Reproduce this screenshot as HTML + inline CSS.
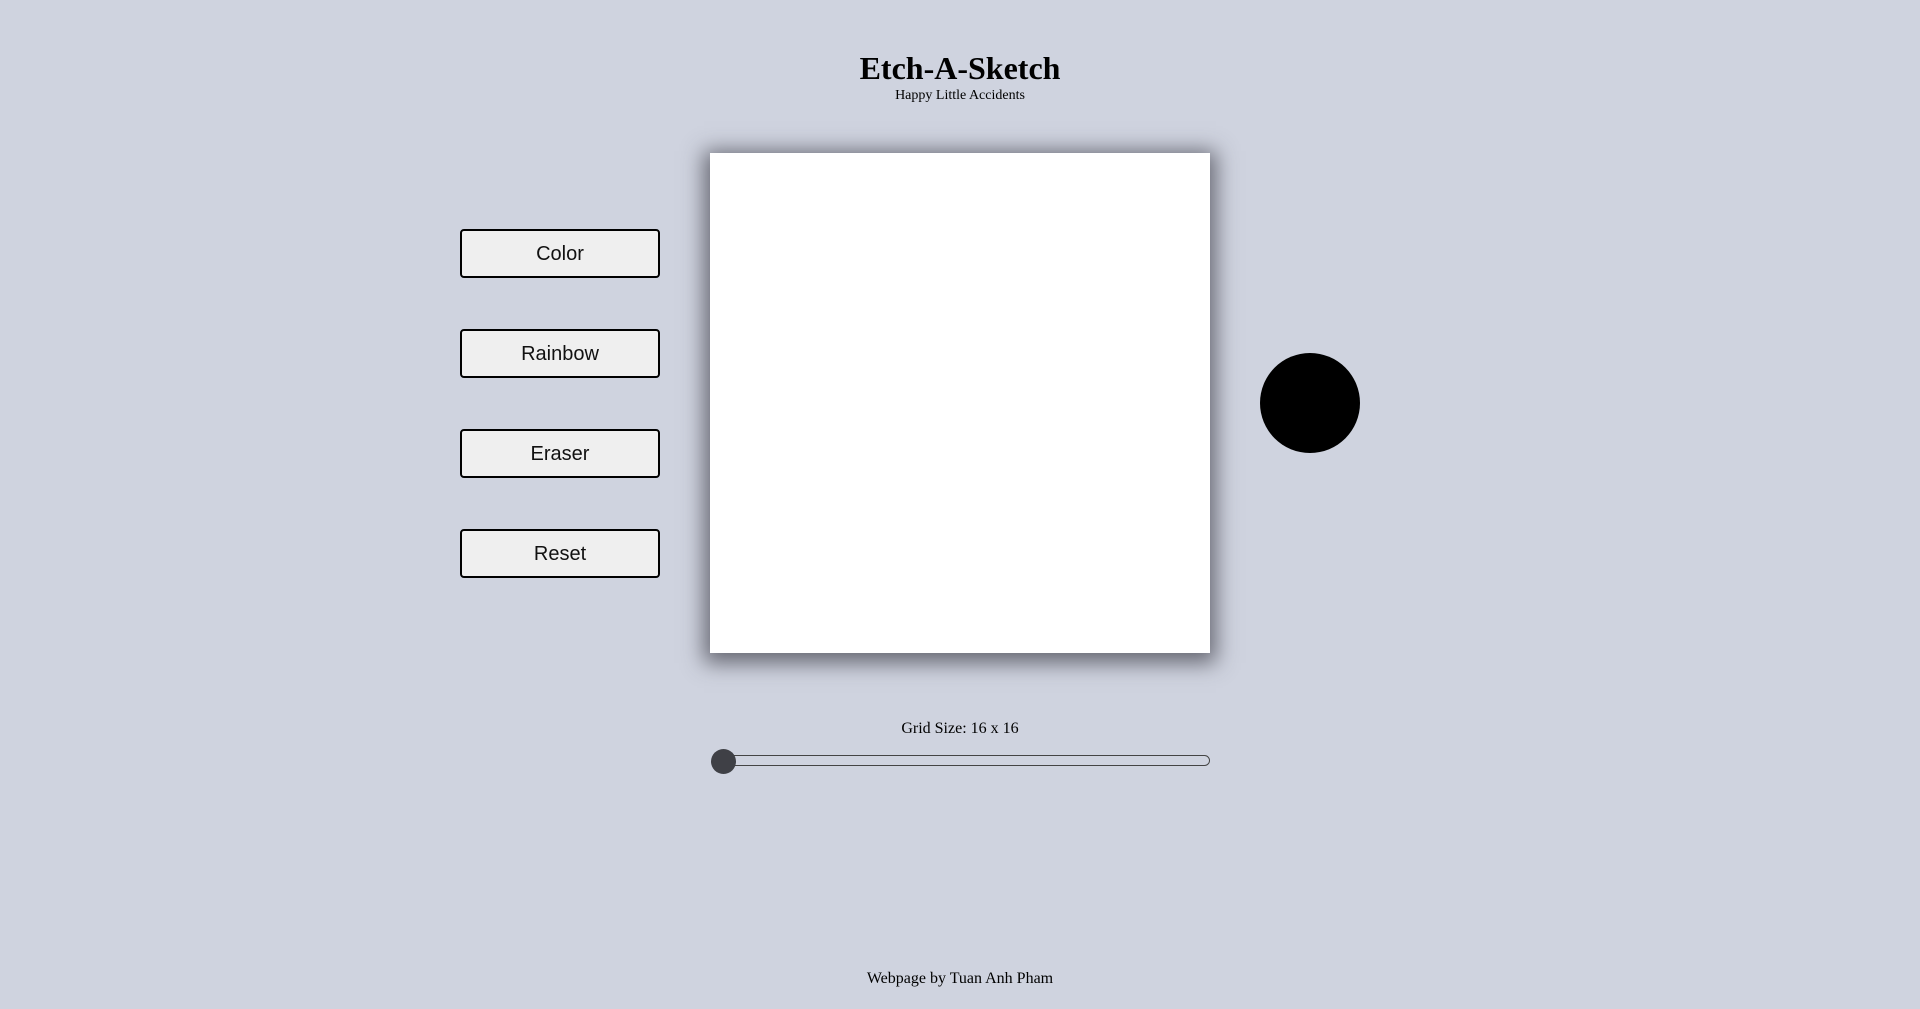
<!DOCTYPE html>
<html><head><style>
body{margin:0;width:1920px;height:1009px;background:#cfd3df;position:relative;font-family:"Liberation Serif",serif;overflow:hidden}
h1{position:absolute;top:50px;left:0;width:1920px;text-align:center;margin:0;font-size:32px;line-height:36px;font-weight:bold}
.sub{position:absolute;top:88px;left:0;width:1920px;text-align:center;font-size:14px}
.btn{position:absolute;left:460px;width:196px;height:45px;border:2px solid #000;border-radius:4px;background:#efefef;font-family:"Liberation Sans",sans-serif;font-size:20px;text-align:center;line-height:47px;color:#111}
.canvas{position:absolute;left:710px;top:153px;width:500px;height:500px;background:#fff;box-shadow:0 4px 20px 6px rgba(60,60,70,.7)}
.circle{position:absolute;left:1260px;top:353px;width:100px;height:100px;border-radius:50%;background:#000}
.gs{position:absolute;top:720px;left:0;width:1920px;text-align:center;font-size:16px}
.track{position:absolute;left:712px;top:755px;width:498px;height:11px;border:1.5px solid #444;border-radius:6px;box-sizing:border-box}
.thumb{position:absolute;left:711px;top:749px;width:25px;height:25px;border-radius:50%;background:#3f4046}
.foot{position:absolute;top:970px;left:0;width:1920px;text-align:center;font-size:16px}
</style></head><body>
<h1>Etch-A-Sketch</h1>
<div class="sub">Happy Little Accidents</div>
<div class="btn" style="top:229px">Color</div>
<div class="btn" style="top:329px">Rainbow</div>
<div class="btn" style="top:429px">Eraser</div>
<div class="btn" style="top:529px">Reset</div>
<div class="canvas"></div>
<div class="circle"></div>
<div class="gs">Grid Size: 16 x 16</div>
<div class="track"></div>
<div class="thumb"></div>
<div class="foot">Webpage by Tuan Anh Pham</div>
</body></html>
